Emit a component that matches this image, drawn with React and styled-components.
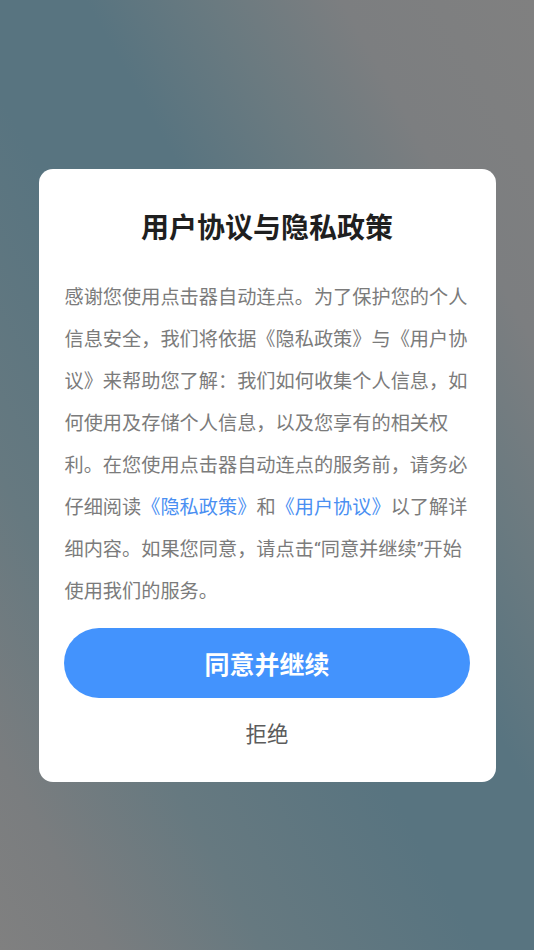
import React from 'react';
import styled, { createGlobalStyle } from 'styled-components';

const GlobalStyle = createGlobalStyle`
  html, body {
    margin: 0;
    padding: 0;
  }
  body {
    font-family: Roboto, "Noto Sans CJK SC", sans-serif;
  }
`;

const Screen = styled.div`
  width: 534px;
  height: 950px;
  display: flex;
  align-items: center;
  justify-content: center;
  background: linear-gradient(
    to top right,
    #808080 0%,
    #7a7d7f 10%,
    #667980 25%,
    #587480 45%,
    #587480 58%,
    #6a7a80 70%,
    #7c7e80 82%,
    #808080 100%
  );
`;

const Card = styled.div`
  width: 457px;
  box-sizing: border-box;
  padding: 42px 26px 32px 26px;
  background: #fff;
  border-radius: 14px;
  display: flex;
  flex-direction: column;
  align-items: center;
`;

const Title = styled.h2`
  margin: 0;
  font-size: 28px;
  line-height: 36px;
  font-weight: 700;
  color: #1f1f1f;
  text-align: center;
`;

const Body = styled.p`
  margin: 30px 0 0;
  width: 405px;
  font-size: 19.2px;
  line-height: 42px;
  color: #7b7b7b;
  text-align: left;
`;

const Link = styled.a`
  color: #4a8ff2;
  text-decoration: none;
`;

const AgreeButton = styled.button`
  margin-top: 15px;
  width: 406px;
  height: 70px;
  border: 0;
  border-radius: 35px;
  background: #4393fd;
  color: #fff;
  font-family: inherit;
  font-size: 25px;
  font-weight: 700;
  cursor: pointer;
`;

const RejectButton = styled.button`
  margin-top: 22px;
  border: 0;
  background: transparent;
  padding: 0;
  height: 30px;
  line-height: 30px;
  font-family: inherit;
  font-size: 21.5px;
  color: #5c5c5c;
  cursor: pointer;
`;

export default function App() {
  return (
    <Screen>
      <GlobalStyle />
      <Card>
        <Title>用户协议与隐私政策</Title>
        <Body>
          感谢您使用点击器自动连点。为了保护您的个人信息安全，我们将依据《隐私政策》与《用户协议》来帮助您了解：我们如何收集个人信息，如何使用及存储个人信息，以及您享有的相关权利。在您使用点击器自动连点的服务前，请务必仔细阅读
          <Link href="#">《隐私政策》</Link>和<Link href="#">《用户协议》</Link>
          以了解详细内容。如果您同意，请点击“同意并继续”开始使用我们的服务。
        </Body>
        <AgreeButton>同意并继续</AgreeButton>
        <RejectButton>拒绝</RejectButton>
      </Card>
    </Screen>
  );
}
